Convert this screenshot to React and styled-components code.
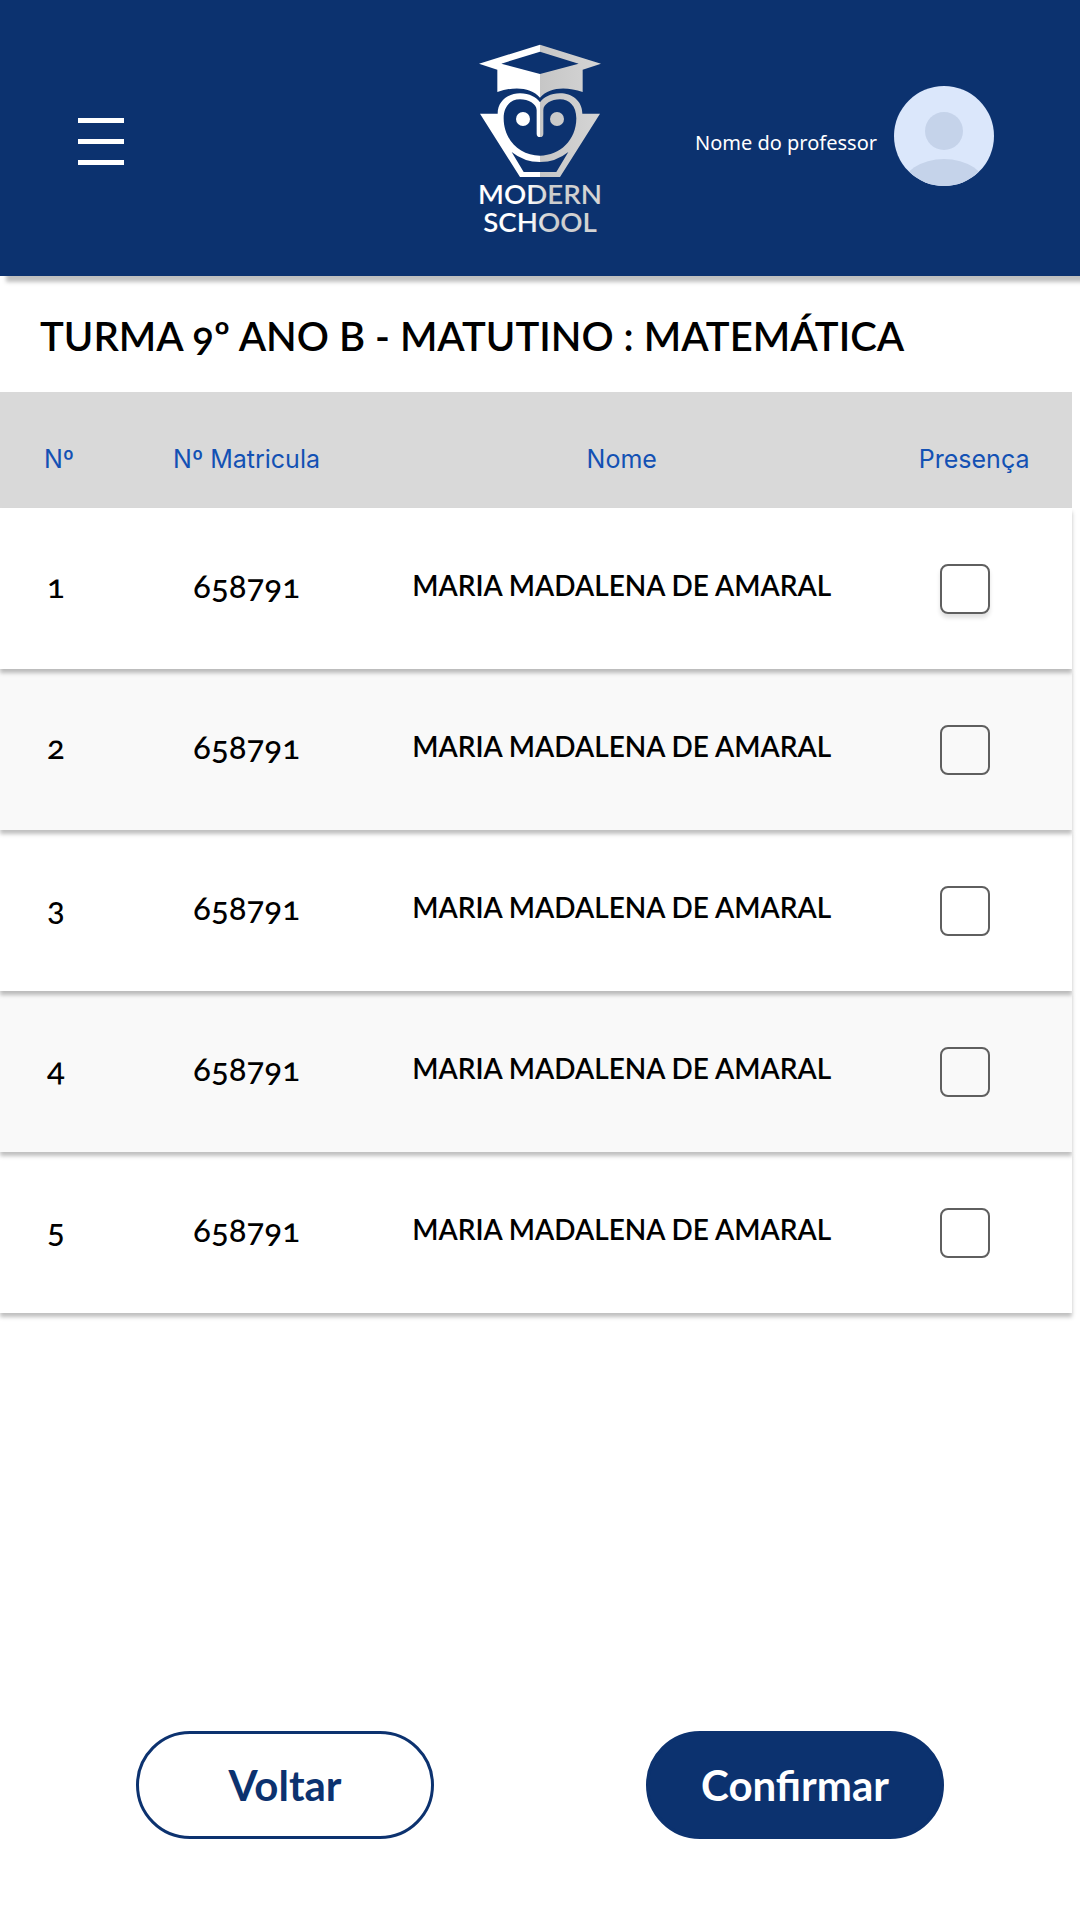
import React from "react";
import styled, { createGlobalStyle } from "styled-components";

const navy = "#0c326f";
const display = `Lato, "Open Sans", sans-serif`;

const GlobalStyle = createGlobalStyle`
  *, *::before, *::after { box-sizing: border-box; }
  body {
    margin: 0;
    background: #ffffff;
    color: #000000;
    font-family: ${display};
    font-variant-numeric: oldstyle-nums;
  }
`;

const Page = styled.div`
  display: flex;
  flex-direction: column;
  min-height: 100vh;
  overflow-x: hidden;
`;

const TopBar = styled.header`
  display: grid;
  grid-template-columns: 1fr auto 1fr;
  align-items: start;
  padding: 30px 78px 26px;
  background: ${navy};
  box-shadow: 6px 6px 4px rgba(0, 0, 0, 0.25);
`;

const MenuButton = styled.button`
  display: flex;
  flex-direction: column;
  align-items: flex-start;
  gap: 16px;
  margin-top: 88px;
  padding: 0;
  border: 0;
  background: none;
  cursor: pointer;
`;

const MenuLine = styled.span`
  width: 46px;
  height: 5px;
  background: #ffffff;
`;

const LogoArt = styled.svg`
  display: block;
  width: 160px;
  height: 220px;
`;

const Wordmark = styled.text`
  font-family: ${display};
  font-size: 83px;
  font-weight: 600;
  text-anchor: middle;
`;

const Account = styled.div`
  display: flex;
  align-items: center;
  justify-content: flex-end;
  gap: 17px;
  margin-top: 56px;
  padding-right: 8px;
`;

const TeacherName = styled.span`
  padding-top: 14px;
  color: #ffffff;
  font-family: "Noto Sans", sans-serif;
  font-size: 20px;
  line-height: 28px;
  white-space: nowrap;
`;

const Avatar = styled.svg`
  flex: none;
  width: 100px;
  height: 100px;
  border-radius: 50%;
`;

const Title = styled.h1`
  margin: 0;
  padding: 36px 40px 32px;
  font-size: 40px;
  font-weight: 600;
  line-height: 48px;
`;

const Roster = styled.table`
  width: calc(100% - 8px);
  table-layout: fixed;
  border-spacing: 0;
`;

const Col = styled.col`
  width: ${(p) => p.$share};
`;

const HeadCell = styled.th`
  height: 116px;
  padding: 18px 0 0 ${(p) => (p.$last ? "8px" : "0")};
  background: #d9d9d9;
  color: #1351b4;
  font-family: Inter, sans-serif;
  font-size: 25px;
  font-weight: 400;
  line-height: 30px;
  text-align: center;
`;

const Row = styled.tr`
  position: relative;
  z-index: ${(p) => p.$layer};
  background: ${(p) => (p.$shaded ? "#f9f9f9" : "#ffffff")};
  box-shadow: 0 4px 4px rgba(0, 0, 0, 0.25);
`;

const Cell = styled.td`
  height: 161px;
  padding: 0 0 8px;
  font-size: 33px;
  font-weight: 500;
  line-height: 40px;
  text-align: center;
`;

const IndexCell = styled(Cell)`
  padding-right: 6px;
`;

const NameCell = styled(Cell)`
  font-size: 28px;
  font-weight: 600;
`;

const CheckCell = styled(Cell)`
  padding: 0 10px 0 0;
`;

const Check = styled.input`
  appearance: none;
  display: block;
  width: 50px;
  height: 50px;
  margin: 0 auto;
  border: 2px solid #5f5f5f;
  border-radius: 8px;
  box-shadow: ${(p) => (p.$raised ? "0 4px 4px rgba(0, 0, 0, 0.12)" : "none")};
  cursor: pointer;

  &:checked {
    background: ${navy};
  }
`;

const Actions = styled.footer`
  display: flex;
  justify-content: center;
  gap: 212px;
  margin-top: auto;
  padding: 40px 40px 81px;
`;

const ActionButton = styled.button`
  width: 298px;
  height: 108px;
  padding: 0;
  border: 3px solid ${navy};
  border-radius: 54px;
  background: ${(p) => (p.$primary ? navy : "#ffffff")};
  color: ${(p) => (p.$primary ? "#ffffff" : navy)};
  font-family: inherit;
  font-size: 42px;
  font-weight: 700;
  line-height: 48px;
  cursor: pointer;
`;

const students = [1, 2, 3, 4, 5].map((number) => ({
  number,
  enrolment: "658791",
  name: "MARIA MADALENA DE AMARAL",
}));

function Logo() {
  return (
    <LogoArt viewBox="0 0 480 660" role="img" aria-label="Modern School">
      <defs>
        <linearGradient id="metal" gradientUnits="userSpaceOnUse" x1="0" y1="0" x2="480" y2="0">
          <stop offset="0.5" stopColor="#ffffff" />
          <stop offset="0.5" stopColor="#c6c6c6" />
          <stop offset="0.9" stopColor="#d6d6d6" />
        </linearGradient>
        <linearGradient id="lettering" gradientUnits="userSpaceOnUse" x1="0" y1="0" x2="480" y2="0">
          <stop offset="0.42" stopColor="#ffffff" />
          <stop offset="0.56" stopColor="#cccccc" />
          <stop offset="0.9" stopColor="#d6d6d6" />
        </linearGradient>
      </defs>
      <g fill="url(#metal)" fillRule="evenodd">
        <path d="M57 101 240 44 423 101 368 119V186C320 169 268 170 240 203C212 170 160 169 112 186V119ZM124 101 240 132 356 101 240 65Z" />
        <path d="M60 251H113C113 212 145 190 180 190C208 190 230 202 240 217C250 202 272 190 300 190C335 190 367 212 367 251H420L300 441H180ZM131 265C131 330 180 377 240 377C300 377 349 330 349 265C349 228 328 208 300 208C275 208 250 222 250 240V311A10 10 0 0 1 230 311V240C230 222 205 208 180 208C152 208 131 228 131 265ZM155 366 191 426H289L325 366Q288 396 240 396Q192 396 155 366Z" />
        <circle cx="189" cy="267" r="21" />
        <circle cx="291" cy="267" r="21" />
      </g>
      <Wordmark fill="url(#lettering)">
        <tspan x="240" y="523">MODERN</tspan>
        <tspan x="240" y="607">SCHOOL</tspan>
      </Wordmark>
    </LogoArt>
  );
}

export default function App() {
  return (
    <Page>
      <GlobalStyle />
      <TopBar>
        <MenuButton type="button" aria-label="Menu">
          <MenuLine />
          <MenuLine />
          <MenuLine />
        </MenuButton>
        <Logo />
        <Account>
          <TeacherName>Nome do professor</TeacherName>
          <Avatar viewBox="0 0 100 100" aria-hidden="true">
            <rect width="100" height="100" fill="#dbe7fb" />
            <circle cx="50" cy="45" r="19" fill="#c5d3ea" />
            <ellipse cx="50" cy="101" rx="42" ry="28" fill="#c5d3ea" />
          </Avatar>
        </Account>
      </TopBar>

      <main>
        <Title>TURMA 9º ANO B - MATUTINO : MATEMÁTICA</Title>
        <Roster>
          <colgroup>
            <Col $share="11%" />
            <Col $share="24%" />
            <Col $share="46%" />
            <Col $share="19%" />
          </colgroup>
          <thead>
            <tr>
              <HeadCell scope="col">Nº</HeadCell>
              <HeadCell scope="col">Nº Matricula</HeadCell>
              <HeadCell scope="col">Nome</HeadCell>
              <HeadCell scope="col" $last>Presença</HeadCell>
            </tr>
          </thead>
          <tbody>
            {students.map((s, i) => (
              <Row key={s.number} $shaded={i % 2 === 1} $layer={students.length - i}>
                <IndexCell>{s.number}</IndexCell>
                <Cell>{s.enrolment}</Cell>
                <NameCell>{s.name}</NameCell>
                <CheckCell>
                  <Check
                    type="checkbox"
                    $raised={i === 0}
                    aria-label={`Presença de ${s.name}, nº ${s.number}`}
                  />
                </CheckCell>
              </Row>
            ))}
          </tbody>
        </Roster>
      </main>

      <Actions>
        <ActionButton type="button">Voltar</ActionButton>
        <ActionButton type="button" $primary>Confirmar</ActionButton>
      </Actions>
    </Page>
  );
}
